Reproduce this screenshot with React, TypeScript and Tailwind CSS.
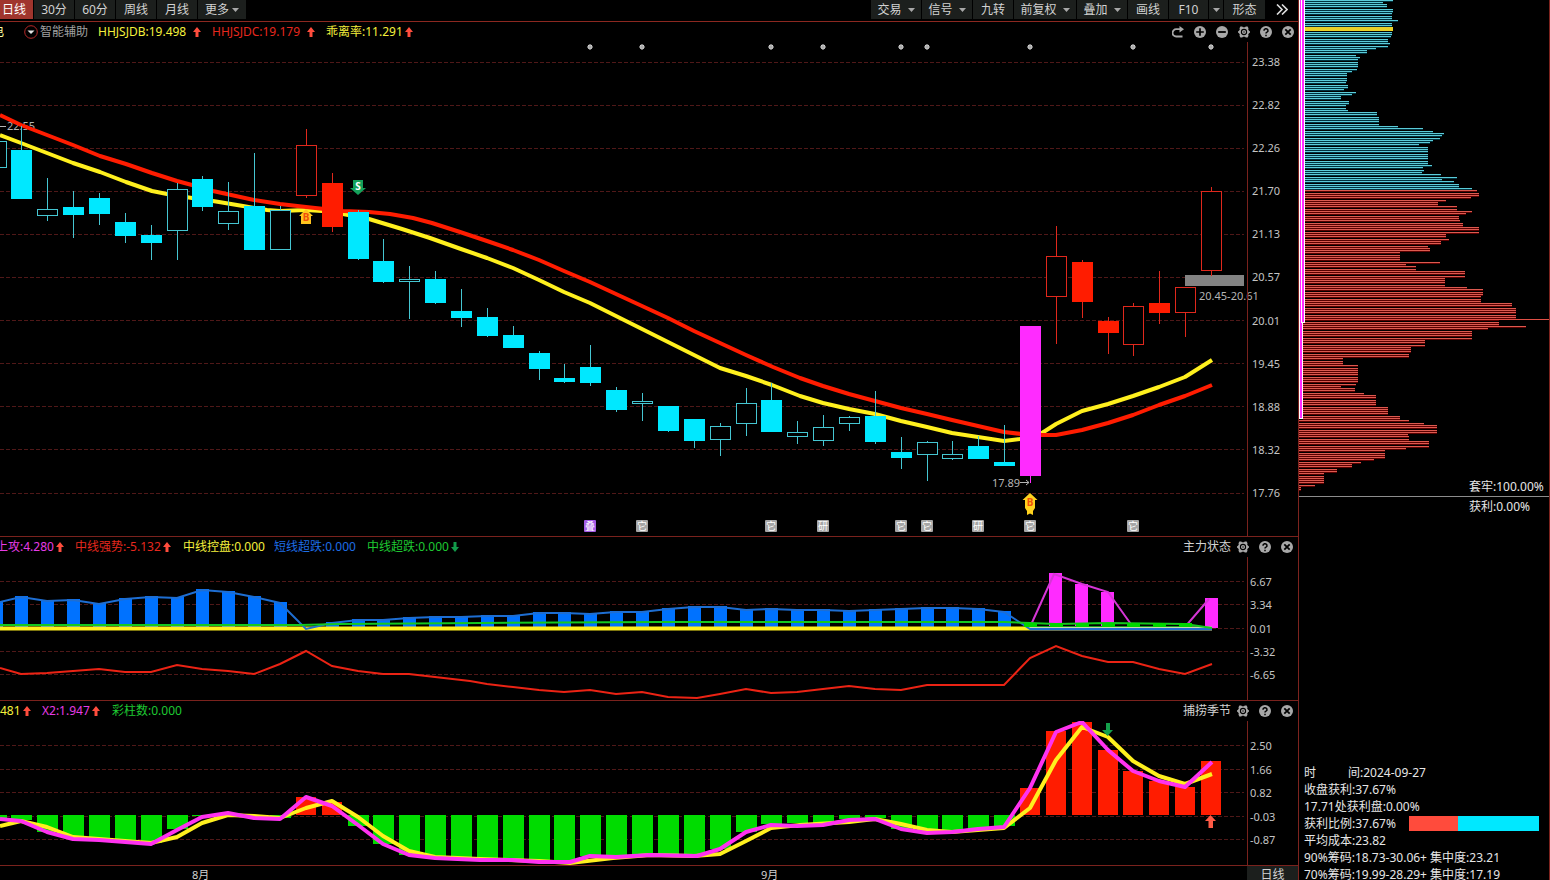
import React from 'react';

type Candle = [x: number, high: number, top: number, bottom: number, low: number, kind: string];
type Bar = [x: number, y: number];

const CYAN = '#00e8ff';
const RED = '#ff1c00';
const MAGENTA = '#ff2bff';

const periods = ['30分', '60分', '周线', '月线'];

const tools = [
  { label: '交易', width: 'w-[50px]', menu: true },
  { label: '信号', width: 'w-[50px]', menu: true },
  { label: '九转', width: 'w-10', menu: false },
  { label: '前复权', width: 'w-[62px]', menu: true },
  { label: '叠加', width: 'w-[50px]', menu: true },
  { label: '画线', width: 'w-10', menu: false },
  { label: 'F10', width: 'w-[39px]', menu: false },
  { label: '', width: 'w-[14px]', menu: true },
  { label: '形态', width: 'w-[41px]', menu: false },
];

// kind: f = filled cyan, h = hollow cyan, R = filled red, r = hollow red, m = limit-up magenta
const candles: Candle[] = [
  [-4, 141, 141, 168, 168, 'h'],
  [21, 126, 150, 199, 199, 'f'],
  [47, 178, 209, 216, 221, 'h'],
  [73, 191, 207, 215, 238, 'f'],
  [99, 193, 198, 214, 225, 'f'],
  [125, 213, 222, 236, 243, 'f'],
  [151, 225, 235, 243, 260, 'f'],
  [177, 183, 189, 231, 260, 'h'],
  [202, 176, 179, 207, 211, 'f'],
  [228, 182, 211, 224, 230, 'h'],
  [254, 153, 206, 250, 250, 'f'],
  [280, 206, 210, 250, 250, 'h'],
  [306, 129, 145, 196, 198, 'r'],
  [332, 173, 183, 227, 232, 'R'],
  [358, 210, 212, 259, 260, 'f'],
  [383, 239, 261, 282, 283, 'f'],
  [409, 266, 279, 282, 319, 'h'],
  [435, 271, 279, 303, 304, 'f'],
  [461, 289, 311, 318, 327, 'f'],
  [487, 308, 317, 336, 337, 'f'],
  [513, 326, 335, 348, 348, 'f'],
  [539, 351, 353, 369, 380, 'f'],
  [564, 364, 378, 382, 383, 'f'],
  [590, 345, 367, 383, 386, 'f'],
  [616, 387, 390, 410, 412, 'f'],
  [642, 393, 401, 404, 421, 'h'],
  [668, 406, 406, 431, 432, 'f'],
  [694, 419, 419, 441, 448, 'f'],
  [720, 423, 426, 440, 456, 'h'],
  [746, 388, 403, 424, 436, 'h'],
  [771, 383, 400, 432, 432, 'f'],
  [797, 421, 432, 437, 444, 'h'],
  [823, 415, 427, 441, 446, 'h'],
  [849, 416, 417, 424, 431, 'h'],
  [875, 391, 416, 442, 444, 'f'],
  [901, 437, 452, 458, 469, 'f'],
  [927, 441, 442, 455, 481, 'h'],
  [952, 441, 454, 459, 460, 'h'],
  [978, 436, 446, 459, 459, 'f'],
  [1004, 425, 462, 466, 466, 'f'],
  [1030, 326, 326, 476, 483, 'm'],
  [1056, 226, 256, 297, 344, 'r'],
  [1082, 260, 262, 302, 318, 'R'],
  [1108, 317, 321, 333, 354, 'R'],
  [1133, 303, 306, 345, 356, 'r'],
  [1159, 271, 303, 313, 324, 'R'],
  [1185, 287, 287, 313, 337, 'r'],
  [1211, 187, 191, 271, 276, 'r'],
];

const slowLine =
  '0,115 21,125 47,135 73,145 100,156 126,164 152,173 177,181 192,185 213,191 254,200 280,204 306,207 343,211 369,212 390,214 413,218 432,223 460,232 487,241 513,250 539,260 564,271 590,282 616,294 642,306 668,318 694,331 720,343 746,355 773,367 800,378 823,386 849,394 875,401 901,408 927,414 952,420 978,426 1004,432 1030,435 1056,435 1082,430 1108,423 1133,415 1159,405 1185,396 1212,385';
const fastLine =
  '0,135 21,143 47,153 73,163 100,172 126,182 152,191 167,194 192,198 213,201 243,206 267,210 280,211 306,210 322,211 343,214 369,219 402,229 430,238 461,249 487,258 513,268 539,280 564,292 590,303 616,316 642,329 668,342 694,355 720,368 746,376 772,385 800,396 823,403 849,409 875,414 901,421 927,427 952,433 978,437 1004,441 1020,439 1042,433 1056,424 1082,411 1108,404 1133,396 1159,387 1185,377 1212,360';

const eventDots = [590, 642, 771, 823, 901, 927, 1030, 1133, 1211];

const newsBadges: [number, string][] = [
  [590, '叠'],
  [642, '它'],
  [771, '它'],
  [823, '研'],
  [901, '它'],
  [927, '它'],
  [978, '研'],
  [1030, '它'],
  [1133, '它'],
];

const shortBars: Bar[] = [
  [-4, 602], [21, 596], [47, 600], [73, 599], [99, 603], [125, 598], [151, 596], [177, 597],
  [202, 589], [228, 591], [254, 596], [280, 602], [306, 628], [332, 622], [358, 619], [383, 619],
  [409, 617], [435, 616], [461, 616], [487, 615], [513, 615], [539, 612], [564, 612], [590, 613],
  [616, 611], [642, 611], [668, 608], [694, 606], [720, 606], [746, 609], [771, 608], [797, 609],
  [823, 609], [849, 610], [875, 609], [901, 608], [927, 607], [952, 607], [978, 608], [1004, 611],
];
const attackBars: Bar[] = [[1056, 573], [1082, 584], [1108, 592], [1212, 598]];
const trendLine =
  '0,668 21,674 47,673 73,671 99,669 125,672 151,672 177,665 202,669 228,671 254,674 280,664 306,651 332,666 358,671 383,674 409,674 435,677 470,681 487,684 513,687 539,690 564,692 590,690 616,694 642,692 668,697 697,698 720,694 746,689 771,693 797,692 823,689 849,686 875,689 901,690 927,685 952,685 1004,685 1030,658 1056,646 1082,656 1108,662 1133,662 1159,669 1185,674 1212,664';

const seasonBars: Bar[] = [
  [-4, 820], [21, 820], [47, 832], [73, 838], [99, 839], [125, 841], [151, 843], [177, 829],
  [202, 816], [254, 817], [280, 818], [306, 797], [332, 802], [358, 826], [383, 844], [409, 855],
  [435, 857], [461, 858], [487, 858], [513, 859], [539, 860], [564, 862], [590, 856], [616, 857],
  [642, 855], [668, 856], [694, 855], [720, 849], [746, 832], [771, 824], [797, 823], [823, 823],
  [849, 819], [875, 818], [901, 829], [927, 831], [952, 831], [978, 829], [1004, 826], [1030, 788],
  [1056, 731], [1082, 722], [1108, 750], [1133, 771], [1159, 781], [1185, 787], [1211, 761],
];
const seasonSlow =
  '0,826 21,821 47,827 73,837 99,839 151,843 177,837 202,823 228,815 254,816 280,818 306,808 332,801 358,817 383,836 409,851 435,857 480,859 539,861 570,863 613,858 650,855 694,856 720,854 746,841 771,828 800,825 849,822 875,819 901,824 927,830 952,832 978,830 1004,828 1030,808 1056,760 1082,727 1108,737 1133,761 1159,776 1185,784 1212,774';
const seasonFast =
  '0,819 21,821 47,832 73,839 99,840 151,844 177,830 202,817 228,813 254,818 280,819 306,797 332,806 358,825 383,844 409,855 435,858 480,860 512,860 539,862 570,862 590,856 616,857 650,855 697,856 720,849 746,832 771,825 797,826 823,825 849,820 875,819 901,829 927,833 952,832 978,829 1004,827 1030,788 1056,732 1082,722 1108,750 1133,771 1159,781 1185,787 1212,762';

// [last y of the run, right end of its bars]
const chipRuns: [number, number][] = [
  [1, 1393], [3, 1383], [6, 1387], [8, 1389], [12, 1393], [19, 1392], [22, 1398], [35, 1392],
  [38, 1391], [42, 1388], [45, 1390], [47, 1388], [49, 1376], [52, 1367], [54, 1371], [56, 1356],
  [58, 1360], [66, 1358], [70, 1357], [72, 1352], [81, 1347], [84, 1346], [88, 1348], [91, 1344],
  [93, 1356], [95, 1352], [100, 1341], [104, 1349], [108, 1346], [111, 1348], [116, 1377],
  [125, 1379], [127, 1398], [130, 1423], [132, 1433], [134, 1444], [136, 1442], [139, 1440],
  [141, 1433], [143, 1430], [146, 1419], [164, 1428], [166, 1432], [169, 1423], [171, 1424],
  [173, 1422], [176, 1441], [178, 1457], [180, 1442], [182, 1454], [187, 1459], [189, 1472],
  [192, 1477], [196, 1479], [198, 1471], [201, 1446], [205, 1438], [210, 1457], [212, 1472],
  [215, 1466], [219, 1459], [222, 1460], [226, 1463], [233, 1479], [237, 1446], [240, 1449],
  [244, 1441], [247, 1428], [251, 1430], [260, 1400], [263, 1440], [265, 1406], [270, 1416],
  [277, 1465], [286, 1445], [288, 1467], [294, 1483], [302, 1481], [306, 1512], [318, 1516],
  [325, 1499], [327, 1526], [329, 1488], [339, 1472], [345, 1425], [352, 1411], [357, 1409],
  [364, 1343], [382, 1358], [384, 1356], [387, 1341], [391, 1355], [394, 1364], [405, 1376],
  [414, 1388], [419, 1400], [421, 1409], [423, 1424], [433, 1437], [435, 1408], [440, 1409],
  [446, 1429], [449, 1406], [458, 1385], [460, 1374], [463, 1361], [467, 1352], [471, 1337],
  [483, 1324], [485, 1315], [494, 1301],
];

const chipRows = Array.from({ length: 214 }, (_, i) => {
  const y = Math.floor(i * 2.3);
  const run = chipRuns.find(([last]) => y <= last) ?? [494, 1301];
  return { y, start: y < 322 ? 1305 : y < 419 ? 1303 : 1299, end: run[1] };
});

const Caret = () => (
  <svg className="h-1 w-[7px] shrink-0" viewBox="0 0 7 4">
    <path d="M0 0h7L3.5 4z" fill="#a8a8a8" />
  </svg>
);

const Arrow = ({ down = false }: { down?: boolean }) => (
  <svg className="h-[10px] w-2 shrink-0" viewBox="0 0 8 10">
    {down ? (
      <path d="M2.500 0h3v5H8L4 10 0 5h2.500z" fill="#129a4a" />
    ) : (
      <path d="M4 0l4 5H5.500v5h-3V5H0z" fill="#ff4d3d" />
    )}
  </svg>
);

const shapes: Record<string, React.ReactNode> = {
  复位: (
    <>
      <path d="M8.500 3.200H4.200a3.300 3.300 0 0 0 0 7.300H10.500" fill="none" stroke="#a8a8a8" strokeWidth="1.800" />
      <path d="M7.500 0L12 3.200 7.500 6.400z" fill="#a8a8a8" />
    </>
  ),
  放大: (
    <>
      <circle cx="6" cy="6" r="6" fill="#a8a8a8" />
      <path d="M6 2.200v7.600M2.200 6h7.600" stroke="#000" strokeWidth="1.700" />
    </>
  ),
  缩小: (
    <>
      <circle cx="6" cy="6" r="6" fill="#a8a8a8" />
      <path d="M2.200 6h7.600" stroke="#000" strokeWidth="1.800" />
    </>
  ),
  设置: (
    <>
      <path
        d="M2.400.6h1.800l.8.700h2l.8-.7h1.800l.9 1.600-.3 1.300.8 1.300 1 .6v1.200l-1 .6-.8 1.300.3 1.300-.9 1.600H7.800l-.8-.7H5l-.8.7H2.400L1.500 9.800l.3-1.300L1 7.200l-1-.6V5.400l1-.6.8-1.300-.3-1.300z"
        fill="#a8a8a8"
      />
      <circle cx="6" cy="6" r="2.600" fill="none" stroke="#000" strokeWidth="1.100" />
      <circle cx="6" cy="6" r=".7" fill="#000" />
    </>
  ),
  帮助: (
    <>
      <circle cx="6" cy="6" r="6" fill="#a8a8a8" />
      <path d="M4 4.700a2 1.900 0 1 1 3 1.500c-.8.400-1 .7-1 1.400M6 8.700v1.500" fill="none" stroke="#000" strokeWidth="1.500" />
    </>
  ),
  关闭: (
    <>
      <circle cx="6" cy="6" r="6" fill="#a8a8a8" />
      <path d="M3.300 3.300l5.400 5.400M8.700 3.300L3.300 8.700" stroke="#000" strokeWidth="1.800" />
    </>
  ),
};

const PanelIcons = ({ names }: { names: string[] }) => (
  <div className="flex gap-[10px]">
    {names.map((name) => (
      <button key={name} aria-label={name} className="size-3">
        <svg className="size-3" viewBox="0 0 12 12">{shapes[name]}</svg>
      </button>
    ))}
  </div>
);

interface LegendItem {
  text: string;
  style: string;
  arrow?: 'up' | 'down';
}

const Legend = ({ items }: { items: LegendItem[] }) => (
  <>
    {items.map((item) => (
      <span key={item.text} className={`flex shrink-0 items-center gap-[2px] whitespace-nowrap ${item.style}`}>
        {item.text}
        {item.arrow && <Arrow down={item.arrow === 'down'} />}
      </span>
    ))}
  </>
);

const Scale = ({ values, pad }: { values: string[]; pad: string }) => (
  <div className={`flex w-[51px] shrink-0 flex-col justify-between border-l border-[#7a221d] text-[11px] leading-4 text-[#c4c4c4] ${pad}`}>
    {values.map((v) => (
      <span key={v}>{v}</span>
    ))}
  </div>
);

const Grid = ({ rows }: { rows: number[] }) => (
  <>
    {rows.map((y) => (
      <line key={y} x1="0" x2="1244" y1={y + 0.5} y2={y + 0.5} stroke="#501818" strokeDasharray="4 2" />
    ))}
  </>
);

const CandleShape = ({ candle }: { candle: Candle }) => {
  const [x, high, top, bottom, low, kind] = candle;
  const filled = kind === 'f' || kind === 'R' || kind === 'm';
  const line = kind === 'm' ? MAGENTA : kind === 'r' || kind === 'R' ? '#e0281c' : '#45c6d2';
  const fill = kind === 'm' ? MAGENTA : kind === 'R' ? RED : CYAN;
  return (
    <g>
      <line x1={x + 0.5} x2={x + 0.5} y1={high} y2={low} stroke={line} />
      {filled ? (
        <rect x={x - 10} y={top} width="21" height={bottom - top} fill={fill} />
      ) : (
        <rect x={x - 9.5} y={top + 0.5} width="20" height={bottom - top - 1} fill="#000" stroke={line} />
      )}
    </g>
  );
};

const PriceChart = () => (
  <svg className="h-full min-w-0 flex-1 overflow-visible" viewBox="0 42 1247 494" preserveAspectRatio="xMaxYMin slice">
    <Grid rows={[62, 105, 148, 191, 234, 277, 320, 363, 406, 449, 493]} />
    <path d="M0 126.500h6" stroke="#b4b4b4" />
    <text x="7" y="130" fontSize="11" fill="#b4b4b4">22.55</text>
    <rect x="1185" y="275" width="59" height="11" fill="#838383" />
    <g fill="none" strokeWidth="4" strokeLinejoin="round">
      <polyline points={fastLine} stroke="#fff01e" />
      <polyline points={slowLine} stroke={RED} />
    </g>
    {candles.map((c) => (
      <CandleShape key={c[0]} candle={c} />
    ))}
    {eventDots.map((x) => (
      <g key={x}>
        <circle cx={x} cy="47" r="2.400" fill="#dcdcdc" />
        <path d={`M${x - 3} 47h6M${x} 44v6`} stroke="#9a9a9a" />
      </g>
    ))}

    {/* buy and sell marks */}
    <g fontSize="10" fontWeight="bold" textAnchor="middle">
      <path d="M306 209l7 7h-2v8h-10v-8h-2z" fill="#ffc41e" />
      <text x="306" y="221" fill="#f0500a">B</text>
      <path d="M353 180h10v8h3l-8 7-8-7h3z" fill="#14a05a" />
      <text x="358" y="190" fill="#fff">S</text>
      <path d="M1030 493l7.500 7H1035v8l-2 3v4l-3-1.500-3 1.500v-4l-2-3v-8h-2.500z" fill="#ffd21e" />
      <text x="1030" y="506" fill="#f0500a">B</text>
    </g>

    <text x="992" y="487" fontSize="11" fill="#b4b4b4">17.89</text>
    <path d="M1020 482.500h9M1026 480l3 2.500-3 2.500" fill="none" stroke="#b4b4b4" />
    <text x="1199" y="300" fontSize="11" fill="#b4b4b4">20.45-20.61</text>

    {newsBadges.map(([x, label]) => (
      <g key={x}>
        <rect x={x - 6} y="520" width="12" height="12" rx="1" fill={label === '叠' ? '#a45ce6' : '#a6a6a6'} />
        <text x={x} y="530" fontSize="10" fill="#fff" textAnchor="middle">{label}</text>
      </g>
    ))}
  </svg>
);

const ForceChart = () => (
  <svg className="h-full min-w-0 flex-1" viewBox="0 557 1247 143" preserveAspectRatio="xMaxYMin slice">
    <Grid rows={[581, 604, 628, 651, 674]} />
    {shortBars.map(([x, y]) => (
      <rect key={x} x={x - 6} y={y} width="13" height={628 - y} fill="#0072ff" />
    ))}
    {attackBars.map(([x, y]) => (
      <rect key={x} x={x - 7} y={y} width="13" height={628 - y} fill={MAGENTA} />
    ))}
    <g fill="none" strokeWidth="2">
      <polyline points="1030,627 1054,574 1082,584 1108,592 1133,627 1185,627 1209,599" stroke="#d636d6" />
      <path d="M0 628.500h1030" stroke="#fff01e" strokeWidth="4" />
      <path d="M1030 628.500h182" stroke="#c8dcaa" strokeWidth="4" />
      <polyline points={`${shortBars.map(([x, y]) => `${x},${y + 1}`).join(' ')} 1030,629 1212,629`} stroke="#1e6ed2" />
      <path d="M1034 626.500h156" stroke="#149a1e" strokeWidth="1" />
      <polyline points="0,625 300,625 340,624 480,623 660,622 1004,622 1030,623 1056,624 1108,623 1185,624 1212,628" stroke="#14c81e" />
      <polyline points={trendLine} stroke="#eb2314" />
    </g>
    {[1030, 1056, 1082, 1108, 1133, 1159, 1185].map((x) => (
      <rect key={x} x={x - 6} y="623" width="13" height="4" fill="#00d600" />
    ))}
  </svg>
);

const SeasonChart = () => (
  <svg className="h-full min-w-0 flex-1" viewBox="0 721 1247 144" preserveAspectRatio="xMaxYMin slice">
    <Grid rows={[745, 769, 792, 816, 839]} />
    {seasonBars.map(([x, y]) => (
      <rect
        key={x}
        x={x - 10}
        y={Math.min(y, 815)}
        width={y < 815 ? 20 : 21}
        height={Math.abs(y - 815)}
        fill={y < 815 ? RED : '#00dc00'}
      />
    ))}
    <g fill="none" strokeWidth="4" strokeLinejoin="round">
      <polyline points={seasonSlow} stroke="#fff01e" />
      <polyline points={seasonFast} stroke="#ff32f0" />
    </g>
    <path d="M1106 723h4v7h3l-5.500 6-5.500-6h4z" fill="#14a04b" />
    <path d="M1210.500 815l5.500 6h-3v7h-4.500v-7h-3.500z" fill="#ff5a46" />
  </svg>
);

const ChipChart = () => (
  <svg className="h-full w-full" viewBox="1299 0 250 496" preserveAspectRatio="xMinYMin slice">
    {chipRows.map(({ y, start, end }) => (
      <g key={y}>
        <rect x={start} y={y + 1} width={end - start} height="1" fill={y < 190 ? '#00323e' : '#5a0000'} />
        <rect x={start} y={y} width={end - start} height="1" fill={y < 190 ? '#5ccbd8' : '#dc5a50'} />
      </g>
    ))}
    <rect x="1305" y="27" width="88" height="4" fill="#ebd228" />
    <rect x="1303" y="319" width="246" height="1" fill="#e05046" />
    <rect x="1299" y="0" width="4" height="419" fill="#fff" />
    <rect x="1300" y="0" width="2" height="418" fill={MAGENTA} />
    <rect x="1301" y="0" width="4" height="323" fill="#fff" />
    <rect x="1302" y="0" width="2" height="322" fill={MAGENTA} />
  </svg>
);

const App = () => {
  return (
    <div className="flex h-screen overflow-hidden bg-black font-['Noto_Sans','Noto_Sans_CJK_SC',sans-serif] text-xs text-[#d2d2d2]">
      <main className="flex min-w-0 flex-1 flex-col">
        {/* Toolbar */}
        <header className="flex h-[22px] shrink-0 justify-between border-b border-[#8c2820]">
          <nav className="flex h-[19px] gap-px">
            <button className="w-[33px] bg-[#a0352d] pr-[7px] text-right whitespace-nowrap text-white">日线</button>
            {periods.map((p) => (
              <button key={p} className="w-10 bg-[#1c1f1d]">{p}</button>
            ))}
            <button className="flex w-12 items-center justify-center gap-[3px] bg-[#1c1f1d]">
              更多
              <Caret />
            </button>
          </nav>
          <nav className="flex h-[19px] gap-px">
            {tools.map((t) => (
              <button
                key={t.label}
                aria-label={t.label || 'F10菜单'}
                className={`flex items-center justify-center gap-[6px] bg-[#1c1f1d] ${t.width}`}
              >
                {t.label}
                {t.menu && <Caret />}
              </button>
            ))}
            <button aria-label="展开" className="flex w-8 items-center justify-center">
              <svg className="h-[11px] w-3" viewBox="0 0 12 11">
                <path d="M1 .5l5 5-5 5M6 .5l5 5-5 5" fill="none" stroke="#dcdcdc" strokeWidth="1.600" />
              </svg>
            </button>
          </nav>
        </header>

        {/* Daily price */}
        <section className="flex min-h-0 flex-1 flex-col border-b border-[#7a221d]">
          <div className="flex h-5 shrink-0 items-center justify-between pr-1">
            <div className="-ml-2 flex items-center">
              <span className="w-8 text-[#ffffa0]">电</span>
              <button className="flex w-[74px] items-center gap-[2px] text-[#a0a0a0]">
                <svg className="size-[14px]" viewBox="0 0 14 14">
                  <circle cx="7" cy="7" r="6.300" fill="none" stroke="#b42828" />
                  <path d="M3.500 5.500h7L7 9z" fill="#e6e6e6" />
                </svg>
                智能辅助
              </button>
              <Legend
                items={[
                  { text: 'HHJSJDB:19.498', style: 'mr-[11px] w-[103px] justify-between text-[#f5f03c]', arrow: 'up' },
                  { text: 'HHJSJDC:19.179', style: 'mr-[11px] w-[103px] justify-between text-[#e6281e]', arrow: 'up' },
                  { text: '乖离率:11.291', style: 'text-[#f5f03c]', arrow: 'up' },
                ]}
              />
            </div>
            <PanelIcons names={['复位', '放大', '缩小', '设置', '帮助', '关闭']} />
          </div>
          <div className="flex min-h-0 flex-1">
            <PriceChart />
            <Scale
              values={['23.38', '22.82', '22.26', '21.70', '21.13', '20.57', '20.01', '19.45', '18.88', '18.32', '17.76']}
              pad="pt-3 pb-[35px] pl-1"
            />
          </div>
        </section>

        {/* Main force state */}
        <section className="flex h-[164px] shrink-0 flex-col border-b border-[#7a221d]">
          <div className="flex h-5 shrink-0 items-center justify-between pr-[5px]">
            <div className="-ml-1 flex items-center">
              <Legend
                items={[
                  { text: '上攻:4.280', style: 'w-[79px] text-[#e63ce6]', arrow: 'up' },
                  { text: '中线强势:-5.132', style: 'w-[108px] text-[#e6281e]', arrow: 'up' },
                  { text: '中线控盘:0.000', style: 'w-[91px] text-[#f5f03c]' },
                  { text: '短线超跌:0.000', style: 'w-[93px] text-[#1e6ee6]' },
                  { text: '中线超跌:0.000', style: 'text-[#1ec832]', arrow: 'down' },
                ]}
              />
            </div>
            <div className="flex items-center gap-[6px]">
              <h2>主力状态</h2>
              <PanelIcons names={['设置', '帮助', '关闭']} />
            </div>
          </div>
          <div className="flex min-h-0 flex-1">
            <ForceChart />
            <Scale values={['6.67', '3.34', '0.01', '-3.32', '-6.65']} pad="pt-[17px] pb-[17px] pl-[2px]" />
          </div>
        </section>

        {/* Fishing season */}
        <section className="flex h-[165px] shrink-0 flex-col border-b border-[#7a221d]">
          <div className="flex h-5 shrink-0 items-center justify-between pr-[5px]">
            <div className="flex items-center">
              <Legend
                items={[
                  { text: '481', style: 'w-[42px] text-[#f5f03c]', arrow: 'up' },
                  { text: 'X2:1.947', style: 'w-[70px] text-[#e63ce6]', arrow: 'up' },
                  { text: '彩柱数:0.000', style: 'text-[#1ec832]' },
                ]}
              />
            </div>
            <div className="flex items-center gap-[6px]">
              <h2>捕捞季节</h2>
              <PanelIcons names={['设置', '帮助', '关闭']} />
            </div>
          </div>
          <div className="flex min-h-0 flex-1">
            <SeasonChart />
            <Scale values={['2.50', '1.66', '0.82', '-0.03', '-0.87']} pad="pt-[17px] pb-[17px] pl-[2px]" />
          </div>
        </section>

        <footer className="flex h-[14px] shrink-0 justify-between leading-[18px]">
          <div className="flex pl-48 text-[11px]">
            <span className="w-[569px]">8月</span>
            <span>9月</span>
          </div>
          <button className="h-[18px] w-[51px] bg-[#1c1f1d]">日线</button>
        </footer>
      </main>

      {/* Chip distribution */}
      <aside className="flex w-[252px] shrink-0 flex-col border-x border-[#7d231e] text-[#e6e6e6]">
        <div className="relative h-[496px] shrink-0">
          <ChipChart />
          <span className="absolute bottom-0 left-[170px] leading-[18px]">套牢:100.00%</span>
        </div>
        <p className="border-t border-[#8c8c8c] pl-[170px] leading-5">获利:0.00%</p>
        <ul className="mt-auto -mb-[3px] pl-[5px] leading-[17px] whitespace-nowrap">
          <li>
            <span className="inline-block w-11">时</span>间:2024-09-27
          </li>
          <li>收盘获利:37.67%</li>
          <li>17.71处获利盘:0.00%</li>
          <li className="flex items-center">
            <span className="w-[105px]">获利比例:37.67%</span>
            <span className="flex h-[15px] w-[130px] bg-[#00e8ff]">
              <span className="bg-[#ff4b3c]" style={{ width: '37.67%' }} />
            </span>
          </li>
          <li>平均成本:23.82</li>
          <li>90%筹码:18.73-30.06+ 集中度:23.21</li>
          <li>70%筹码:19.99-28.29+ 集中度:17.19</li>
        </ul>
      </aside>
    </div>
  );
};

export default App;
